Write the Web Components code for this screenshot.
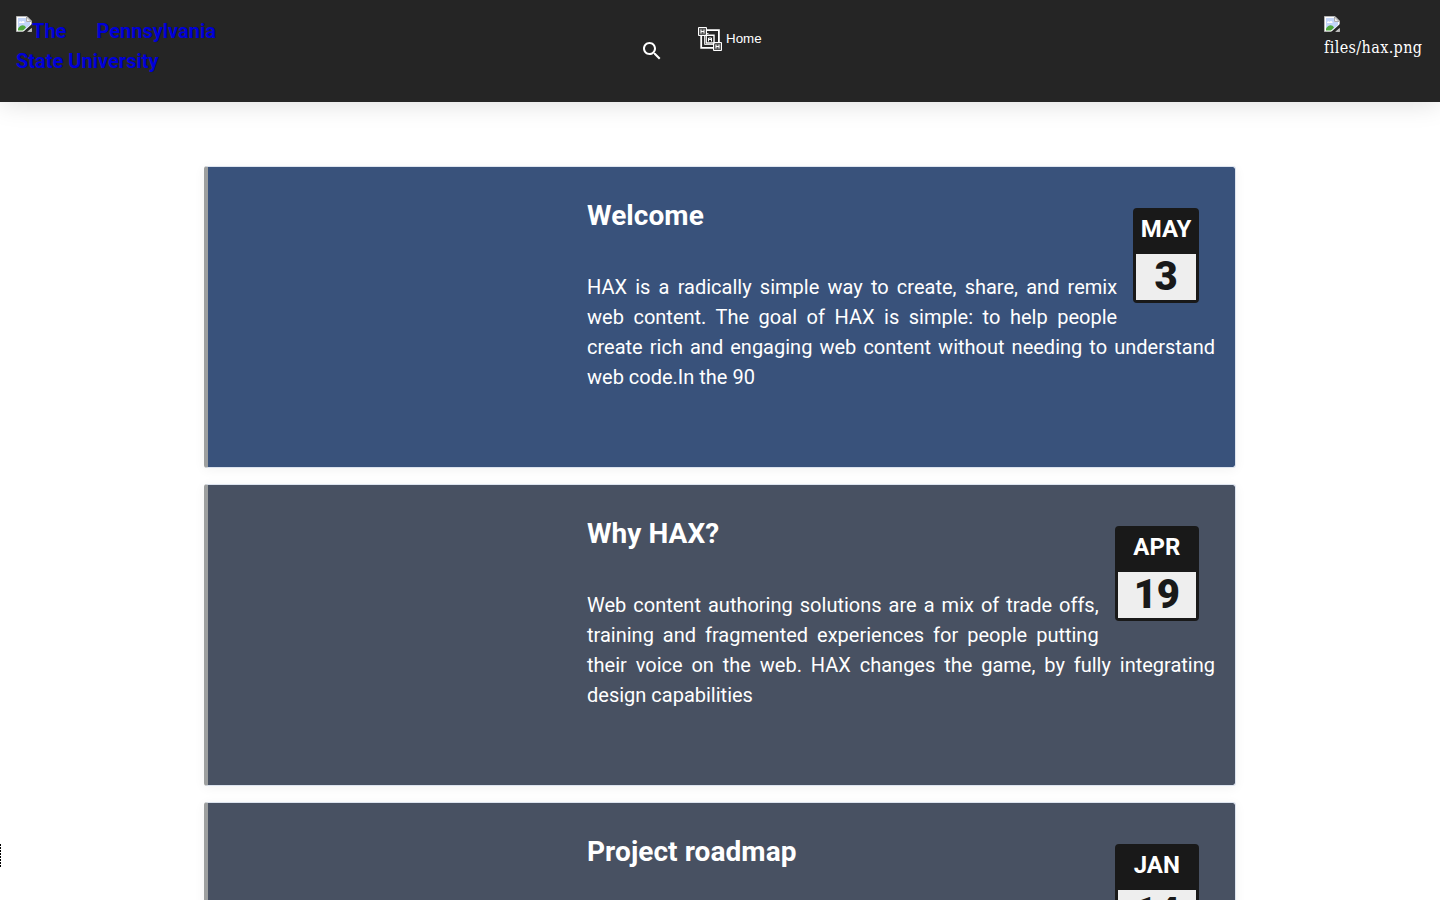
<!DOCTYPE html>
<html lang="en">
<head>
<meta charset="utf-8">
<title>HAX</title>
<style>
html,body{margin:0;height:100%;overflow:hidden;background:#fff}
body{font-family:Roboto,sans-serif;font-size:20px;line-height:30px}
</style>
</head>
<body>
<hax-page>
  <site-header slot="header"></site-header>
  <post-card heading="Welcome" month="MAY" day="3" style="--card:#39527b">HAX is a radically simple way to create, share, and remix web content. The goal of HAX is simple: to help people create rich and engaging web content without needing to understand web code.In the 90</post-card>
  <post-card heading="Why HAX?" month="APR" day="19">Web content authoring solutions are a mix of trade offs, training and fragmented experiences for people putting their voice on the web. HAX changes the game, by fully integrating design capabilities</post-card>
  <post-card heading="Project roadmap" month="JAN" day="14"></post-card>
</hax-page>
<script>
class Base extends HTMLElement {
  constructor() {
    super();
    this.attachShadow({mode: "open"});
  }
  connectedCallback() { this.shadowRoot.innerHTML = this.render(); }
}

customElements.define("broken-image", class extends Base {
  render() {
    return `<style>
:host{display:inline-block;width:16px;height:16px;flex:none}
svg{display:block}
</style>
<svg width="16" height="16" viewBox="0 0 16 16">
<path d="M.5.5H11L15.5 5v10.5H.5Z" fill="#fff" stroke="#b4b4b4"/>
<path d="M2 2h8v4h4v3L8 14H2Z" fill="#c3d5f8"/>
<path d="M3 7c0-2 2-2 2.500-1C6.500 4 9 5 8.500 7Z" fill="#fff"/>
<path d="M2 14.500v-2c3-4 6-4 8-1l-3 3Z" fill="#4ea83d"/>
<path d="M10.500 1v4.500H15Z" fill="#eee" stroke="#999" stroke-width=".8"/>
<path d="M16 8 7 16h4l5-4Z" fill="#252525"/>
<path d="M12 15.500h3.500V12Z" fill="#bbb"/>
</svg>`;
  }
});

customElements.define("site-header", class extends Base {
  render() {
    return `<style>
:host{display:grid;grid-template-columns:620px auto 1fr;align-items:start;box-sizing:border-box;height:102px;padding:16px;background:#252525;box-shadow:0 2px 24px rgba(0,0,0,.13)}
.logo{width:200px;color:#0000d8;font-weight:700;text-align:justify;text-decoration:none;display:block}
.logo broken-image{vertical-align:top}
.gap{display:inline-block;width:22px}
nav{display:flex;align-items:flex-start;color:#fff;margin-left:4px}
.search{margin:23px 34px 0 0;display:block}
.home{display:flex;align-items:center;height:24px;margin-top:11px;gap:4px;font:13.333px/24px "Liberation Sans",Arial,sans-serif}
.home svg{display:block}
.right{justify-self:end;width:100px;color:#fff;display:grid;gap:0}
.right span{font:16px/32px "Roboto Slab","DejaVu Serif Condensed","DejaVu Serif",serif;letter-spacing:.38px;white-space:nowrap}
</style>
<a class="logo"><broken-image></broken-image>The <i class="gap"></i>Pennsylvania State University</a>
<nav>
<svg class="search" width="24" height="24" viewBox="0 0 24 24" fill="#fff"><path d="M15.500 14h-.79l-.28-.27C15.410 12.590 16 11.110 16 9.500 16 5.910 13.090 3 9.500 3S3 5.910 3 9.500 5.910 16 9.500 16c1.610 0 3.090-.59 4.230-1.570l.27.280v.790l5 4.990L20.490 19l-4.990-5zm-6 0C7.010 14 5 11.990 5 9.500S7.010 5 9.500 5 14 7.010 14 9.500 11.990 14 9.500 14z"/></svg>
<div class="home">
<svg width="24" height="24" viewBox="0 0 24 24" fill="none" stroke="#fff">
<path stroke-width="1.800" d="M9 3.200h11.900V15M3.200 9v11.900H15"/>
<path stroke="#ddd" stroke-width="1" d="M9 6.500h1.500M6.500 9v8.500H15"/>
<path d="M.5.5h8v8h-8zM15.500 15.500h8v8h-8z" fill="#555"/>
<path stroke-width="1.400" d="M8.200 8.200h7.800v7.800H8.200z" fill="#252525"/>
<path stroke-width="1" d="M3 2.500v4M6 2.500v4M3 4.500h3M18 17.500v4M21 17.500v4M18 19.500h3M10.500 14.500v-3.500h3v3.500M10.500 12.500h3"/>
</svg><span>Home</span></div>
</nav>
<div class="right"><broken-image></broken-image><span>files/hax.png</span></div>`;
  }
});

customElements.define("date-badge", class extends Base {
  render() {
    return `<style>
:host{display:block;box-sizing:border-box;height:95px;border:3px solid #191919;border-radius:4px;background:#191919;text-align:center;font-weight:700}
.m{height:43px;padding:0 4.600px;color:#fff;font-size:24px;line-height:36px}
.d{height:46px;padding:0 16px;background:#eee;color:#191919;font-size:40px;line-height:46px;font-weight:900}
</style><div class="m">${this.getAttribute("month")}</div><div class="d">${this.getAttribute("day")}</div>`;
  }
});

customElements.define("post-card", class extends Base {
  render() {
    return `<style>
:host{display:grid;grid-template-columns:379px 1fr;box-sizing:border-box;height:302px;border:1px solid #dce3ee;border-left:4px solid #9d9f9f;border-radius:3px;background:var(--card,#485162);background-clip:padding-box;box-shadow:0 2px 12px rgba(0,0,0,.05);color:#fff;overflow:hidden}
.body{grid-column:2;padding:28px 20px 0 0;text-align:justify}
date-badge{float:right;margin:13px 16px 8px 16px}
h2{margin:0 0 35px;font-size:28px;line-height:42px;text-align:left;letter-spacing:.07px}
p{margin:0}
</style>
<div class="body"><date-badge month="${this.getAttribute("month")}" day="${this.getAttribute("day")}"></date-badge>
<h2>${this.getAttribute("heading")}</h2><p><slot></slot></p></div>`;
  }
});

customElements.define("hax-page", class extends Base {
  render() {
    return `<style>
:host{display:block;height:900px;overflow:hidden;position:relative}
main{display:grid;gap:16px;width:1032px;margin:64px auto 0}
.edge{position:absolute;left:0;top:844px;height:24px;width:1px;background:repeating-linear-gradient(#000 0 2px,#fff 2px 3px)}
</style><slot name="header"></slot><main><slot></slot></main><div class="edge"></div>`;
  }
});
</script>
</body>
</html>
